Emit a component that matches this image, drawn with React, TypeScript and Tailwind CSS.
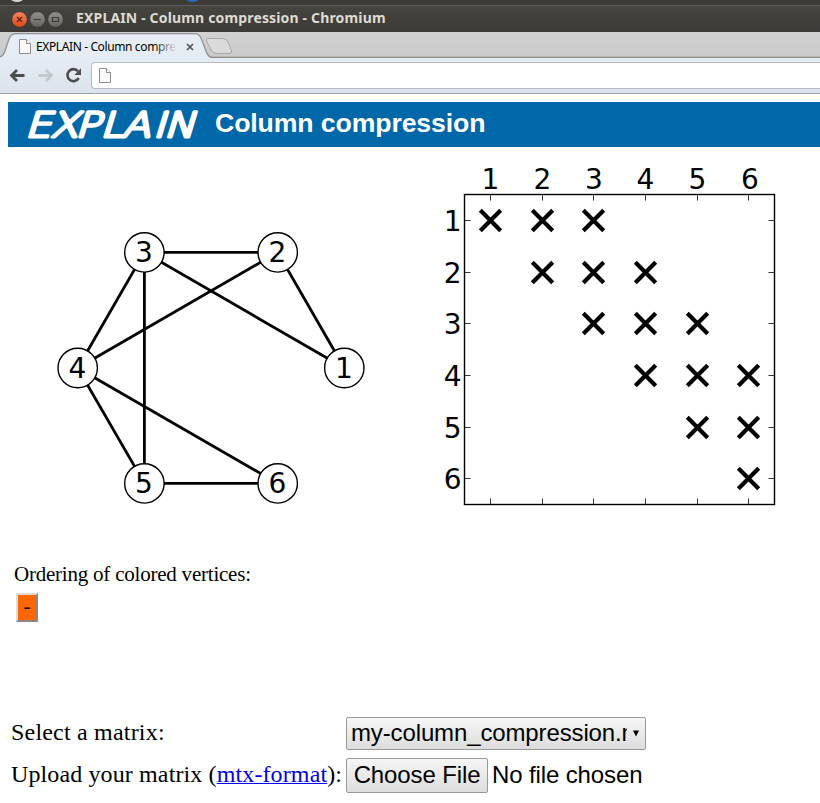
import React from "react";

const nodes = [
  { id: 1, x: 344.3, y: 368 },
  { id: 2, x: 277.7, y: 252.4 },
  { id: 3, x: 144.4, y: 252.4 },
  { id: 4, x: 77.7, y: 368 },
  { id: 5, x: 144.4, y: 483.4 },
  { id: 6, x: 277.7, y: 483.4 },
];

const edges = [[1, 2], [1, 3], [2, 3], [2, 4], [3, 4], [3, 5], [4, 5], [4, 6], [5, 6]];

const colX = [490.5, 542.5, 593.5, 645.5, 697.5, 748.5];
const rowY = [220.5, 272.5, 323.5, 375.5, 427.5, 478.5];
const entries = [
  [0, 0], [0, 1], [0, 2], [1, 1], [1, 2], [1, 3], [2, 2], [2, 3],
  [2, 4], [3, 3], [3, 4], [3, 5], [4, 4], [4, 5], [5, 5],
];

function PageIcon({ className }: { className: string }) {
  return (
    <svg className={className} viewBox="0 0 12 15">
      <path d="M.5.5H7.5L11.5 4.5V14.5H.5Z" fill="#fafafa" stroke="#8d8d8d" />
      <path d="M7.5.5V4.5H11.5" fill="#fff" stroke="#8d8d8d" />
    </svg>
  );
}

function TitleBar() {
  return (
    <div className="flex h-8 flex-col overflow-hidden bg-[#3c3b37]">
      <svg className="block h-[5px] w-full shrink-0" viewBox="0 0 820 5">
        <ellipse cx="17" cy="-1" rx="6" ry="3" fill="#d9d5cc" />
        <ellipse cx="192.500" cy="-2" rx="7" ry="4" fill="#2a67b8" />
      </svg>
      <div className="flex h-[27px] items-center border-t border-[#5d5c56] bg-gradient-to-b from-[#45443f] to-[#3c3b37] pl-[11px]">
        <svg className="h-[17px] w-[53px] shrink-0" viewBox="0 0 53 17">
          <defs>
            <linearGradient id="closeFill" x2="0" y2="1">
              <stop stopColor="#f58462" />
              <stop offset="1" stopColor="#dd4817" />
            </linearGradient>
            <linearGradient id="grayFill" x2="0" y2="1">
              <stop stopColor="#92918a" />
              <stop offset="1" stopColor="#64635d" />
            </linearGradient>
          </defs>
          <circle cx="8.500" cy="8.500" r="7.700" fill="url(#closeFill)" stroke="#33322e" strokeWidth=".5" />
          <circle cx="26.500" cy="8.500" r="7.700" fill="url(#grayFill)" stroke="#33322e" strokeWidth=".5" />
          <circle cx="44.500" cy="8.500" r="7.700" fill="url(#grayFill)" stroke="#33322e" strokeWidth=".5" />
          <path d="M6 6l5 5M11 6l-5 5" stroke="#54281a" strokeWidth="1.300" />
          <path d="M23 8.500h7M41.500 6.500h6v4h-6z" fill="none" stroke="#3c3b37" strokeWidth="1.200" />
        </svg>
        <span className="ml-3 whitespace-nowrap pb-[2px] font-['Noto_Sans',sans-serif] text-[14px] font-bold leading-5 tracking-[0.16px] text-[#dfdbd2]">
          EXPLAIN - Column compression - Chromium
        </span>
      </div>
    </div>
  );
}

function TabStrip() {
  return (
    <div className="relative h-[26px] bg-gradient-to-b from-[#d1d1d1] to-[#cacaca]">
      <svg className="absolute inset-0 h-[26px] w-[820px]" viewBox="0 32 820 26">
        <path d="M0 56.500H820" stroke="#b5b5b5" />
        <path d="M0 57.500H820" stroke="#8d8d8d" />
        <path
          d="M0 57C3 56 4 54 5 51L9 39Q11 34 15 33.700H195Q199 34 201 38L206 51Q208 57 212 57.500V58H0Z"
          fill="#e6ecf3"
        />
        <path
          d="M0 57C3 56 4 54 5 51L9 39Q11 34 15 33.700H195Q199 34 201 38L206 51Q208 57 212 57.500"
          fill="none"
          stroke="#909396"
          strokeWidth="1.300"
        />
        <path
          d="M208 38.500H223Q227 39 228.500 43L231.500 51Q232 53.500 229 53.500H217Q213 53.500 211 50L206.500 41Q205.500 38.500 208 38.500Z"
          fill="#dadada"
          stroke="#a9a9a9"
        />
        <path d="M187 44l6 6M193 44l-6 6" stroke="#555" strokeWidth="1.700" />
      </svg>
      <div className="relative flex h-[26px] items-center pl-[19px] pt-[3px]">
        <PageIcon className="h-[15px] w-3 shrink-0" />
        <div className="relative ml-[5px] w-[141px] overflow-hidden whitespace-nowrap font-['Noto_Sans',sans-serif] text-[12px] leading-5 tracking-[-0.38px] text-black">
          EXPLAIN - Column compression
          <span className="absolute inset-y-0 right-0 w-6 bg-gradient-to-r from-[#e6ecf3]/0 to-[#e6ecf3]" />
        </div>
      </div>
    </div>
  );
}

function Toolbar() {
  return (
    <div className="flex h-9 items-start border-b border-[#9ba3ab] bg-gradient-to-b from-[#e6ecf3] to-[#dce3ea] pt-1">
      <svg className="h-[27px] w-[91px] shrink-0" viewBox="0 62 91 27">
        <path d="M24.500 75.500H12.500M17 70L11.500 75.500L17 81" fill="none" stroke="#4d4d4d" strokeWidth="2.800" />
        <path d="M38.500 75.500H50.500M46 70L51.500 75.500L46 81" fill="none" stroke="#c4c9ce" strokeWidth="2.800" />
        <path d="M78.700 78A6 6 0 1 1 78 71.200" fill="none" stroke="#4d4d4d" strokeWidth="2.600" />
        <path d="M81 68.300V75H74.300Z" fill="#4d4d4d" />
      </svg>
      <div className="flex h-[27px] flex-1 items-center rounded-l-[4px] border border-r-0 border-[#b4bbc2] bg-white pl-[7px]">
        <PageIcon className="h-[15px] w-3" />
      </div>
    </div>
  );
}

function Banner() {
  return (
    <header className="ml-2 mt-2 flex h-[45px] items-start bg-[#0067a8]">
      <svg className="h-[45px] w-[200px] shrink-0" viewBox="8 102 200 45">
        <text
          transform="translate(0 137.300) skewX(-17) scale(1.2 1)"
          x="20.600 41.500 62.500 83.300 101.500 127.300 136.500"
          className="fill-white stroke-white font-['DejaVu_Sans',sans-serif] text-[34.5px] font-extralight"
          strokeWidth="3"
          strokeLinejoin="round"
        >
          EXPLAIN
        </text>
      </svg>
      <h1 className="ml-[7px] whitespace-nowrap font-['Liberation_Sans',Arial,sans-serif] text-[26.67px] font-bold leading-[43px] tracking-[-0.12px] text-white">
        Column compression
      </h1>
    </header>
  );
}

function Diagrams() {
  return (
    <svg
      className="block h-[383px] w-[820px] font-['DejaVu_Sans',sans-serif] text-[28px]"
      viewBox="0 147 820 383"
      textAnchor="middle"
    >
      {edges.map(([a, b]) => (
        <line
          key={`${a}-${b}`}
          x1={nodes[a - 1].x}
          y1={nodes[a - 1].y}
          x2={nodes[b - 1].x}
          y2={nodes[b - 1].y}
          stroke="#000"
          strokeWidth="2.800"
        />
      ))}
      {nodes.map((n) => (
        <g key={n.id}>
          <circle cx={n.x} cy={n.y} r="19.700" fill="#fff" stroke="#000" strokeWidth="1.400" />
          <text x={n.x - 0.4} y={n.y + 9.7}>{n.id}</text>
        </g>
      ))}
      <rect x="464.500" y="194.500" width="310" height="310" fill="none" stroke="#000" strokeWidth="1.400" />
      {colX.map((x, i) => (
        <g key={x}>
          <path d={`M${x} 195v5.500M${x} 504v-5.500`} stroke="#333" />
          <text x={x + (i === 5 ? 1.4 : i === 2 ? 0.4 : -0.2)} y="189">{i + 1}</text>
        </g>
      ))}
      {rowY.map((y, i) => (
        <g key={y}>
          <path d={`M465 ${y}h5.500M774 ${y}h-5.500`} stroke="#333" />
          <text x="461.500" y={y + 10.4} textAnchor="end">{i + 1}</text>
        </g>
      ))}
      {entries.map(([r, c]) => (
        <path
          key={`${r}-${c}`}
          d={`M${colX[c] - 10.2} ${rowY[r] - 10.2}l20.400 20.400m0 -20.400l-20.400 20.400`}
          stroke="#000"
          strokeWidth="4.200"
        />
      ))}
    </svg>
  );
}

export default function App() {
  return (
    <div className="h-[803px] w-[820px] overflow-hidden bg-white text-black">
      <TitleBar />
      <TabStrip />
      <Toolbar />
      <Banner />
      <Diagrams />
      <section className="h-[184px] pl-[14px] pt-8 font-['Liberation_Serif',serif]">
        <p className="text-[21px] leading-6 tracking-[-0.22px]">Ordering of colored vertices:</p>
        <button className="ml-[2px] mt-[7px] flex h-[29px] w-[22px] items-start justify-center border-2 border-b-[#888] border-l-[#ddd] border-r-[#888] border-t-[#ddd] bg-[#ff6600] text-[21px] leading-[22px]">
          -
        </button>
      </section>
      <section className="grid grid-cols-[335px_1fr] pl-[11px] font-['Liberation_Serif',serif] text-[24px]">
        <label className="h-[44px] pt-1 leading-7 tracking-[0.2px]">Select a matrix:</label>
        <div className="pt-[3px]">
          <button className="flex h-[33px] w-[300px] items-center rounded-[2px] border border-[#999] bg-gradient-to-b from-[#f6f6f6] to-[#dddddd] pl-1 font-['Liberation_Sans',Arial,sans-serif]">
            <span className="w-[276px] overflow-hidden whitespace-nowrap pb-[2px] text-left leading-7 tracking-[-0.13px]">
              my-column_compression.mtx
            </span>
            <svg className="ml-[6px] h-[7px] w-[6px]" viewBox="0 0 6 7">
              <path d="M0 0.500H6L3 6.500Z" />
            </svg>
          </button>
        </div>
        <label className="whitespace-nowrap pt-[2px] leading-7 tracking-[0.12px]">
          Upload your matrix (<a className="text-[#0000ee] underline decoration-1">mtx-format</a>):
        </label>
        <div className="flex h-9 items-start font-['Liberation_Sans',Arial,sans-serif] tracking-[-0.12px]">
          <button className="h-[35px] w-[142px] whitespace-nowrap rounded-[2px] border border-[#999] bg-gradient-to-b from-[#f6f6f6] to-[#dddddd] pb-px leading-[32px]">
            Choose File
          </button>
          <span className="ml-1 whitespace-nowrap leading-[34px]">No file chosen</span>
        </div>
      </section>
    </div>
  );
}
